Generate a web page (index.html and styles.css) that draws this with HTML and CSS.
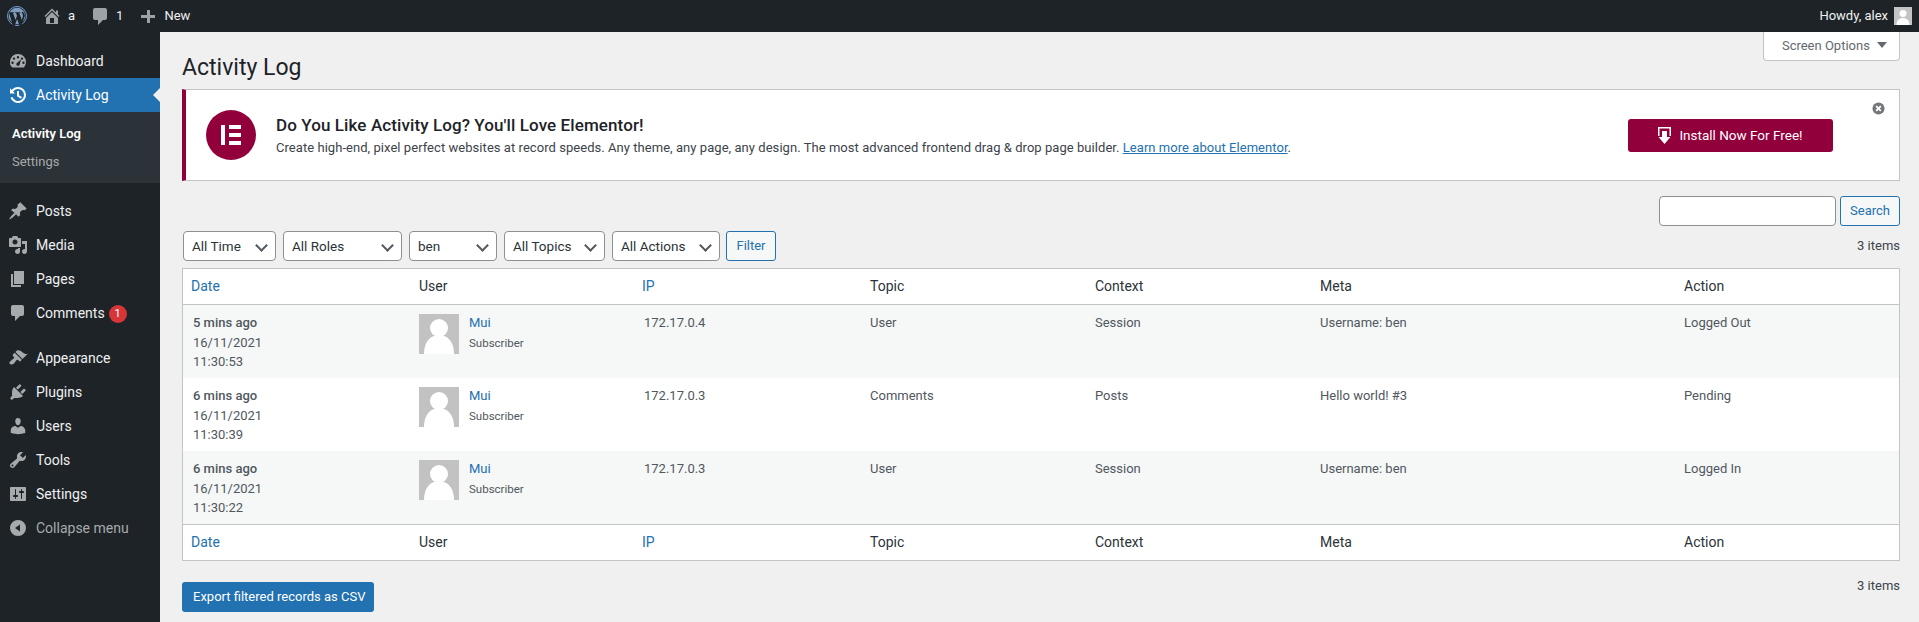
FILE: index.html
```html
<!DOCTYPE html>
<html lang="en">
<head>
  <meta charset="UTF-8">
  <meta name="viewport" content="width=device-width, initial-scale=1.0">
  <title>Activity Log</title>
  <link rel="stylesheet" href="styles.css">
</head>
<body>
  <header class="adminbar">
    <div class="bar-left">
      <svg class="bar-wp" viewBox="0 0 20 20">
        <circle cx="10" cy="10" r="9.500" fill="none" stroke="#6d9fd6" stroke-width="1"/>
        <circle cx="10" cy="10" r="8.300" fill="#7f9dbd"/>
        <path d="M1.900 6.200h5.200v.7l-1.100.2 2.500 7 1.500-4.300-1-2.700-.9-.2v-.7h5.300v.7l-1.100.2 2.500 7 .9-3c.4-1.400.3-2.400-.3-3.300l-.5-.9c-.3-.6 0-1 .5-1.100l2.200 1.800.2 2.600-3.700 10.300-1.200.2-2.800-7.800-2.800 7.800-1.200-.2z" fill="#1d2327"/>
      </svg>
      <a class="bar-item" href="#">
        <svg class="bar-icon" viewBox="0 0 20 20"><path d="M16 8.500l1.530 1.530-1.060 1.060L10 4.620l-6.470 6.470-1.060-1.060L10 2.500l4 4v-2h2v4zm-6-2.460l6 5.990V18H4v-5.970zM12 17v-5H8v5h4z"/></svg>
        a
      </a>
      <a class="bar-item" href="#">
        <svg class="bar-icon" viewBox="0 0 20 20"><path d="M5 2h10c1.100 0 2 .9 2 2v8c0 1.100-.9 2-2 2h-2l-5 5v-5H5c-1.100 0-2-.9-2-2V4c0-1.100.9-2 2-2z"/></svg>
        1
      </a>
      <a class="bar-item" href="#">
        <svg class="bar-icon" viewBox="0 0 20 20"><path d="M17 9v3h-5v5H9v-5H3V9h6V4h3v5h5z"/></svg>
        New
      </a>
    </div>
    <div class="bar-right">
      Howdy, alex
      <svg class="bar-avatar" viewBox="0 0 18 18"><rect width="18" height="18" fill="#c4c4c4"/><circle cx="9" cy="6.500" r="3.500" fill="#fff"/><path d="M2.500 18c0-5 3-7 6.500-7s6.500 2 6.500 7z" fill="#fff"/></svg>
    </div>
  </header>

  <div class="layout">
    <nav class="sidebar">
      <ul class="menu">
        <li class="menu-item">
          <svg class="menu-icon" viewBox="0 0 20 20"><path fill-rule="evenodd" d="M10 3a8 8 0 0 1 8 8c0 2.200-.9 4.200-2.300 5.600H4.300A8 8 0 0 1 10 3zm0 2a1.200 1.200 0 1 0 0 2.400A1.200 1.200 0 0 0 10 5zM6 6.400a1.200 1.200 0 1 0 0 2.400 1.200 1.200 0 0 0 0-2.400zm8 0a1.200 1.200 0 1 0 0 2.400 1.200 1.200 0 0 0 0-2.400zM4.500 10.500a1.200 1.200 0 1 0 0 2.400 1.200 1.200 0 0 0 0-2.400zm11 0a1.200 1.200 0 1 0 0 2.400 1.200 1.200 0 0 0 0-2.400zM13 8.500l-3.800 3.200a1.700 1.700 0 1 0 2.400 2.100z"/></svg>
          Dashboard
        </li>
        <li class="menu-item menu-current">
          <svg class="menu-icon" viewBox="0 0 20 20"><path d="M10 2a8 8 0 1 1-7.500 10.800l1.900-.7A6 6 0 1 0 5.100 6.500L7 8.500H2V3.300l1.700 1.800A8 8 0 0 1 10 2zm-1 4h2v4.300l3 1.800-1 1.700-4-2.500z"/></svg>
          Activity Log
        </li>
        <li class="submenu">
          <a class="submenu-link submenu-current" href="#">Activity Log</a>
          <a class="submenu-link" href="#">Settings</a>
        </li>
        <li class="menu-item menu-gap">
          <svg class="menu-icon" viewBox="0 0 20 20"><path d="M10.440 3.020l1.820-1.820 6.360 6.350-1.830 1.820c-1.050-.68-2.480-.57-3.410.36l-.75.750c-.92.930-1.040 2.350-.35 3.400l-1.830 1.820-2.410-2.410-2.800 2.790c-.42.420-3.380 2.710-3.800 2.290s1.860-3.390 2.280-3.810l2.790-2.790L3.100 9.360l1.830-1.820c1.050.69 2.480.57 3.400-.36l.75-.75c.93-.92 1.050-2.350.36-3.410z"/></svg>
          Posts
        </li>
        <li class="menu-item">
          <svg class="menu-icon" viewBox="0 0 20 20"><path d="M13 11V4c0-.55-.45-1-1-1h-1.670L9 1H5L3.670 3H2c-.55 0-1 .45-1 1v7c0 .55.45 1 1 1h10c.55 0 1-.45 1-1zM7 4.500c1.380 0 2.500 1.120 2.500 2.500S8.380 9.500 7 9.500 4.500 8.380 4.500 7 5.620 4.500 7 4.500zM14 6h5v10.500c0 1.380-1.120 2.500-2.500 2.500S14 17.880 14 16.500s1.120-2.500 2.500-2.500c.17 0 .34.020.5.050V9h-3V6zm-4 8.050V13h2v3.500c0 1.380-1.120 2.500-2.500 2.500S7 17.880 7 16.500 8.120 14 9.500 14c.17 0 .34.020.5.050z"/></svg>
          Media
        </li>
        <li class="menu-item">
          <svg class="menu-icon" viewBox="0 0 20 20"><path d="M6 15V2h10v13H6zm-1 1h8v2H3V5h2v11z"/></svg>
          Pages
        </li>
        <li class="menu-item">
          <svg class="menu-icon" viewBox="0 0 20 20"><path d="M5 2h9c1.100 0 2 .9 2 2v7c0 1.100-.9 2-2 2h-2l-5 5v-5H5c-1.100 0-2-.9-2-2V4c0-1.100.9-2 2-2z"/></svg>
          Comments
          <span class="menu-badge">1</span>
        </li>
        <li class="menu-item menu-gap">
          <svg class="menu-icon" viewBox="0 0 20 20"><path d="M14.480 11.060L7.410 3.990l1.500-1.500c.5-.56 2.300-.47 3.510.32 1.210.8 1.430 1.280 2.910 2.100 1.180.64 2.450 1.260 4.450.85zm-.71.710L6.700 4.700 4.930 6.470c-.39.390-.39 1.020 0 1.410l1.060 1.060c.39.390.39 1.030 0 1.420-.6.600-1.430 1.110-2.210 1.690-.35.260-.7.530-1.010.84C1.430 13.230 1 15.040 1.920 16.120c1.080.91 2.890.48 4.230-.86.310-.31.580-.66.840-1.010.58-.78 1.090-1.610 1.690-2.210.39-.39 1.030-.39 1.420 0l1.060 1.060c.39.390 1.020.39 1.410 0z"/></svg>
          Appearance
        </li>
        <li class="menu-item">
          <svg class="menu-icon" viewBox="0 0 20 20"><path d="M13.110 4.360L9.870 7.600 8 5.730l3.240-3.240c.35-.34 1.050-.2 1.560.32.520.51.660 1.210.31 1.550zm-8 1.770l.91-1.120 9.010 9.010-1.190.84c-.71.710-2.630 1.160-3.820 1.160H6.140L4.900 17.260c-.59.590-1.540.59-2.120 0-.59-.58-.59-1.530 0-2.120l1.240-1.240v-3.880c0-1.130.4-3.190 1.090-3.890zm7.260 3.970l3.240-3.240c.34-.35 1.040-.21 1.550.31.520.51.660 1.210.31 1.550l-3.240 3.250z"/></svg>
          Plugins
        </li>
        <li class="menu-item">
          <svg class="menu-icon" viewBox="0 0 20 20"><path d="M10 9.250c-2.270 0-2.730-3.440-2.730-3.440C7 4.020 7.820 2 9.970 2c2.160 0 2.980 2.020 2.710 3.810 0 0-.41 3.440-2.680 3.440zm0 2.570L12.720 10c2.390 0 4.520 2.330 4.520 4.530v2.490s-3.650 1.130-7.240 1.130c-3.650 0-7.240-1.130-7.240-1.130v-2.490c0-2.250 1.940-4.480 4.470-4.480z"/></svg>
          Users
        </li>
        <li class="menu-item">
          <svg class="menu-icon" viewBox="0 0 20 20"><path d="M16.680 9.770c-1.340 1.340-3.300 1.670-4.950.99l-5.410 6.520c-.99.990-2.590.99-3.580 0s-.99-2.590 0-3.570l6.520-5.420c-.68-1.650-.35-3.610.99-4.950 1.280-1.280 3.120-1.620 4.720-1.060l-2.890 2.890 2.820 2.820 2.860-2.870c.53 1.580.18 3.390-1.080 4.650zM3.810 16.210c.4.390 1.030.39 1.420 0 .4-.4.400-1.030 0-1.430-.39-.39-1.020-.39-1.420 0-.39.400-.39 1.030 0 1.430z"/></svg>
          Tools
        </li>
        <li class="menu-item">
          <svg class="menu-icon" viewBox="0 0 20 20"><path d="M18 16V4c0-.55-.45-1-1-1H3c-.55 0-1 .45-1 1v12c0 .55.45 1 1 1h14c.55 0 1-.45 1-1zM8 11h1c.55 0 1 .45 1 1s-.45 1-1 1H8v1.500c0 .28-.22.5-.5.5s-.5-.22-.5-.5V13H6c-.55 0-1-.45-1-1s.45-1 1-1h1V5.500c0-.28.22-.5.5-.5s.5.220.5.500V11zm5-2h-1c-.55 0-1-.45-1-1s.45-1 1-1h1V5.500c0-.28.220-.5.5-.5s.5.220.5.500V7h1c.55 0 1 .45 1 1s-.45 1-1 1h-1v5.500c0 .28-.22.5-.5.5s-.5-.22-.5-.5V9z"/></svg>
          Settings
        </li>
        <li class="menu-item menu-collapse">
          <svg class="menu-icon" viewBox="0 0 20 20"><path d="M10 2a8 8 0 1 0 0 16 8 8 0 0 0 0-16zm2 4.500v7L7 10z"/></svg>
          Collapse menu
        </li>
      </ul>
    </nav>

    <main class="content">
      <div class="screen-row">
        <button class="screen-options" type="button">Screen Options <span class="caret"></span></button>
      </div>
      <h1 class="page-title">Activity Log</h1>

      <section class="notice">
        <div class="notice-logo">
          <svg viewBox="0 0 50 50"><circle cx="25" cy="25" r="25" fill="#92003b"/><rect x="15" y="15" width="4" height="20" fill="#fff"/><rect x="23" y="15" width="12" height="4" fill="#fff"/><rect x="23" y="23" width="12" height="4" fill="#fff"/><rect x="23" y="31" width="12" height="4" fill="#fff"/></svg>
        </div>
        <div class="notice-text">
          <h3>Do You Like Activity Log? You'll Love Elementor!</h3>
          <p>Create high-end, pixel perfect websites at record speeds. Any theme, any page, any design. The most advanced frontend drag &amp; drop page builder. <a href="#">Learn more about Elementor</a>.</p>
        </div>
        <a class="notice-install" href="#">
          <svg viewBox="0 0 13 17"><path d="M0 0h13v9h-1.500V1.500h-10V9H0z" fill="#fff"/><path d="M4 4h5v6h3.500L6.500 17 .5 10H4z" fill="#fff"/></svg>
          Install Now For Free!
        </a>
        <svg class="notice-close" viewBox="0 0 14 14"><circle cx="7" cy="7" r="6.500" fill="#72777c"/><path d="M4.500 4.500l5 5M9.500 4.500l-5 5" stroke="#fff" stroke-width="2"/></svg>
      </section>

      <div class="search-row">
        <input class="search-input" type="text">
        <button class="btn-outline btn-search" type="button">Search</button>
      </div>

      <div class="filter-row">
        <div class="filters">
          <span class="select select-time">All Time</span>
          <span class="select select-roles">All Roles</span>
          <span class="select select-user">ben</span>
          <span class="select select-topics">All Topics</span>
          <span class="select select-actions">All Actions</span>
          <button class="btn-outline btn-filter" type="button">Filter</button>
        </div>
        <span class="items-count">3 items</span>
      </div>

      <table class="log-table">
        <thead>
          <tr>
            <th class="col-date"><a href="#">Date</a></th>
            <th class="col-user">User</th>
            <th class="col-ip"><a href="#">IP</a></th>
            <th class="col-topic">Topic</th>
            <th class="col-context">Context</th>
            <th class="col-meta">Meta</th>
            <th>Action</th>
          </tr>
        </thead>
        <tbody>
          <tr class="row-alt">
            <td><strong>5 mins ago</strong><br>16/11/2021<br>11:30:53</td>
            <td><div class="user-cell"><svg class="user-avatar" viewBox="0 0 40 40"><rect width="40" height="40" fill="#c2c2c2"/><circle cx="20" cy="14" r="9" fill="#fff"/><path d="M5 40c0-13 7-19 15-19s15 6 15 19z" fill="#fff"/></svg><div><a href="#">Mui</a><br><small>Subscriber</small></div></div></td>
            <td>172.17.0.4</td>
            <td>User</td>
            <td>Session</td>
            <td>Username: ben</td>
            <td>Logged Out</td>
          </tr>
          <tr>
            <td><strong>6 mins ago</strong><br>16/11/2021<br>11:30:39</td>
            <td><div class="user-cell"><svg class="user-avatar" viewBox="0 0 40 40"><rect width="40" height="40" fill="#c2c2c2"/><circle cx="20" cy="14" r="9" fill="#fff"/><path d="M5 40c0-13 7-19 15-19s15 6 15 19z" fill="#fff"/></svg><div><a href="#">Mui</a><br><small>Subscriber</small></div></div></td>
            <td>172.17.0.3</td>
            <td>Comments</td>
            <td>Posts</td>
            <td>Hello world! #3</td>
            <td>Pending</td>
          </tr>
          <tr class="row-alt">
            <td><strong>6 mins ago</strong><br>16/11/2021<br>11:30:22</td>
            <td><div class="user-cell"><svg class="user-avatar" viewBox="0 0 40 40"><rect width="40" height="40" fill="#c2c2c2"/><circle cx="20" cy="14" r="9" fill="#fff"/><path d="M5 40c0-13 7-19 15-19s15 6 15 19z" fill="#fff"/></svg><div><a href="#">Mui</a><br><small>Subscriber</small></div></div></td>
            <td>172.17.0.3</td>
            <td>User</td>
            <td>Session</td>
            <td>Username: ben</td>
            <td>Logged In</td>
          </tr>
        </tbody>
        <tfoot>
          <tr>
            <th><a href="#">Date</a></th>
            <th>User</th>
            <th><a href="#">IP</a></th>
            <th>Topic</th>
            <th>Context</th>
            <th>Meta</th>
            <th>Action</th>
          </tr>
        </tfoot>
      </table>

      <div class="export-row">
        <a class="btn-primary" href="#">Export filtered records as CSV</a>
        <span class="items-count items-bottom">3 items</span>
      </div>
    </main>
  </div>
</body>
</html>
```

FILE: styles.css
```css
* {
  box-sizing: border-box;
}
html, body {
  margin: 0;
  padding: 0;
  height: 622px;
  overflow: hidden;
}
body {
  font-family: Roboto, "Open Sans", Arial, sans-serif;
  font-size: 13px;
  line-height: 1.4;
  color: #3c434a;
  background-color: #f0f0f1;
}
a {
  color: #2271b1;
  text-decoration: none;
}

/* admin bar */
.adminbar {
  height: 32px;
  background-color: #1d2327;
  color: #f0f0f1;
  display: flex;
  justify-content: space-between;
  align-items: center;
  padding: 0 7px;
}
.bar-left {
  display: flex;
  align-items: center;
}
.bar-wp {
  width: 20px;
  height: 20px;
  margin-right: 15px;
}
.bar-item {
  display: flex;
  align-items: center;
  gap: 6px;
  color: #f0f0f1;
  margin-right: 15px;
}
.bar-icon {
  width: 20px;
  height: 20px;
  fill: #9ca2a7;
}
.bar-right {
  display: flex;
  align-items: center;
  gap: 6px;
}
.bar-avatar {
  width: 18px;
  height: 18px;
}

/* page layout */
.layout {
  display: flex;
  height: 590px;
}
.sidebar {
  width: 160px;
  flex-shrink: 0;
  background-color: #1d2327;
  padding-top: 12px;
}
.menu {
  list-style: none;
  margin: 0;
  padding: 0;
}
.menu-item {
  position: relative;
  height: 34px;
  display: flex;
  align-items: center;
  color: #f0f0f1;
  font-size: 14px;
  padding: 2px 0 0 36px;
}
.menu-icon {
  position: absolute;
  left: 8px;
  top: 7px;
  width: 20px;
  height: 20px;
  fill: #a7aaad;
}
.menu-current {
  background-color: #2271b1;
  color: #fff;
}
.menu-current .menu-icon {
  fill: #fff;
}
.menu-current::after {
  content: "";
  position: absolute;
  right: 0;
  top: 10px;
  border: 7px solid transparent;
  border-right-color: #f0f0f1;
  border-left-width: 0;
}
.menu-gap {
  margin-top: 11px;
}
.menu-collapse {
  color: #a7aaad;
}
.menu-badge {
  width: 18px;
  height: 18px;
  margin-left: 4px;
  border-radius: 50%;
  background-color: #d63638;
  color: #fff;
  font-size: 11px;
  line-height: 18px;
  text-align: center;
}
.submenu {
  background-color: #2c3338;
  padding: 8px 0 7px;
}
.submenu-link {
  display: block;
  padding: 5px 12px;
  line-height: 18px;
  color: #a7aaad;
}
.submenu-current {
  color: #fff;
  font-weight: 600;
}

/* main */
.content {
  flex: 1;
  min-width: 0;
  padding: 0 19px 0 22px;
}
.screen-row {
  display: flex;
  justify-content: flex-end;
  height: 0;
}
.screen-options {
  height: 29px;
  width: 137px;
  padding: 0 0 0 6px;
  font: inherit;
  color: #646970;
  background-color: #fff;
  border: 1px solid #c3c4c7;
  border-top: 0;
  border-radius: 0 0 4px 4px;
}
.caret {
  display: inline-block;
  margin-left: 4px;
  border: 5px solid transparent;
  border-top: 6px solid #646970;
  border-bottom: 0;
  vertical-align: 2px;
}
.page-title {
  margin: 0;
  padding: 21px 0 6px;
  font-size: 23px;
  font-weight: 400;
  line-height: 30px;
  color: #1d2327;
}
.notice {
  position: relative;
  height: 92px;
  display: flex;
  align-items: center;
  background-color: #fff;
  border: 1px solid #c3c4c7;
  border-left: 4px solid #92003b;
  padding-left: 20px;
}
.notice-logo {
  width: 50px;
  height: 50px;
  margin-right: 20px;
}
.notice-logo svg {
  display: block;
}
.notice-text {
  flex: 1;
  min-width: 0;
}
.notice-text h3 {
  margin: 0 0 2px;
  font-size: 17px;
  font-weight: 500;
  letter-spacing: 0.1px;
  line-height: 24px;
  color: #1d2327;
}
.notice-text p {
  margin: 0;
  line-height: 18px;
  letter-spacing: 0.05px;
}
.notice-text a {
  text-decoration: underline;
}
.notice-install {
  width: 205px;
  height: 33px;
  margin-right: 66px;
  display: flex;
  align-items: center;
  justify-content: center;
  gap: 8px;
  background-color: #92003b;
  border-radius: 3px;
  color: #fff;
  font-size: 13.500px;
}
.notice-install svg {
  width: 13px;
  height: 17px;
}
.notice-close {
  position: absolute;
  top: 12px;
  right: 14px;
  width: 13px;
  height: 13px;
}
.search-row {
  display: flex;
  justify-content: flex-end;
  gap: 4px;
  margin-top: 15px;
}
.search-input {
  width: 177px;
  height: 30px;
  background-color: #fff;
  border: 1px solid #8c8f94;
  border-radius: 4px;
}
.btn-outline {
  height: 30px;
  padding: 0;
  font: inherit;
  color: #2271b1;
  background-color: #f6f7f7;
  border: 1px solid #2271b1;
  border-radius: 3px;
}
.btn-search {
  width: 60px;
}
.btn-filter {
  width: 50px;
  margin-left: -1px;
}
.filter-row {
  display: flex;
  justify-content: space-between;
  align-items: center;
  margin-top: 5px;
}
.filters {
  display: flex;
  gap: 7px;
  padding-left: 1px;
}
.select {
  position: relative;
  height: 30px;
  line-height: 28px;
  padding-left: 8px;
  font-size: 13.500px;
  background-color: #fff;
  border: 1px solid #8c8f94;
  border-radius: 4px;
  color: #2c3338;
}
.select::after {
  content: "";
  position: absolute;
  right: 9px;
  top: 9px;
  width: 7px;
  height: 7px;
  border-right: 2px solid #50575e;
  border-bottom: 2px solid #50575e;
  transform: rotate(45deg);
}
.select-time { width: 93px; }
.select-roles { width: 119px; }
.select-user { width: 88px; }
.select-topics { width: 101px; }
.select-actions { width: 108px; }

/* table */
.log-table {
  width: 100%;
  margin-top: 7px;
  table-layout: fixed;
  border-collapse: separate;
  border-spacing: 0;
  background-color: #fff;
  border: 1px solid #c3c4c7;
}
.log-table th {
  height: 36px;
  padding: 0 8px;
  font-size: 14px;
  font-weight: 400;
  text-align: left;
  color: #2c3338;
}
.log-table thead th {
  border-bottom: 1px solid #c3c4c7;
}
.log-table tfoot th {
  border-top: 1px solid #c3c4c7;
}
.log-table td {
  height: 73px;
  padding: 8px 8px 6px;
  font-size: 13px;
  line-height: 19.500px;
  vertical-align: top;
  color: #50575e;
}
.log-table td:nth-child(1),
.log-table td:nth-child(3) {
  padding-left: 10px;
}
.row-alt td {
  background-color: #f6f7f7;
}
.log-table strong {
  font-weight: 500;
}
.log-table small {
  font-size: 11.500px;
}
.col-date { width: 228px; }
.col-user { width: 223px; }
.col-ip { width: 228px; }
.col-topic { width: 225px; }
.col-context { width: 225px; }
.col-meta { width: 364px; }
.user-cell {
  display: flex;
  gap: 10px;
}
.user-avatar {
  display: block;
  width: 40px;
  height: 40px;
  margin-top: 1px;
}

.export-row {
  display: flex;
  justify-content: space-between;
  align-items: flex-start;
  margin-top: 21px;
}
.items-bottom {
  margin-top: -5px;
}
.btn-primary {
  height: 30px;
  padding: 0 9px 0 11px;
  line-height: 30px;
  color: #fff;
  background-color: #2271b1;
  border-radius: 3px;
}
```
